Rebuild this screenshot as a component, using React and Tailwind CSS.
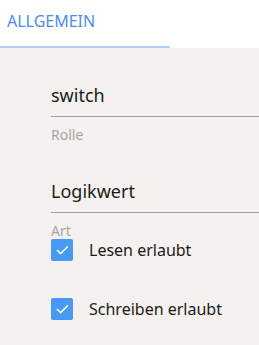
import { Check } from 'lucide-react'

function Field({ value, label }) {
	return (
		<div>
			<div className="h-[38px] border-b border-[#a09d9a] flex items-end pb-[9px] text-[18px] leading-[24px] text-[#1b1b1b]">{value}</div>
			<div className="mt-[10px] text-[14px] leading-[16px] text-[#a8a5a2]">{label}</div>
		</div>
	)
}

function CheckRow({ label }) {
	return (
		<div className="flex items-center h-[22px]">
			<span className="w-[22px] h-[22px] rounded-[2px] bg-[#4799f4] flex items-center justify-center">
				<Check className="w-[15px] h-[15px] text-white" strokeWidth={2.5} />
			</span>
			<span className="ml-[16px] text-[16px] text-[#1b1b1b]">{label}</span>
		</div>
	)
}

export default function App() {
	return (
		<div className="w-[259px] h-[345px] overflow-hidden bg-[#f4f1ee]" style={{ fontFamily: '"Noto Sans", "Open Sans", sans-serif' }}>
			<div className="h-[48px] bg-white">
				<div className="w-[170px] h-[48px] border-b-2 border-[#aed0f8] pl-[7px] pt-[10px] text-[16px] leading-[22px] text-[#4a8ef0]">ALLGEMEIN</div>
			</div>
			<div className="pl-[51px]">
				<div className="mt-[31px]">
					<Field value="switch" label="Rolle" />
				</div>
				<div className="mt-[32px]">
					<Field value="Logikwert" label="Art" />
				</div>
				<div className="mt-[0px] flex flex-col gap-[37px]">
					<CheckRow label="Lesen erlaubt" />
					<CheckRow label="Schreiben erlaubt" />
				</div>
			</div>
		</div>
	)
}
